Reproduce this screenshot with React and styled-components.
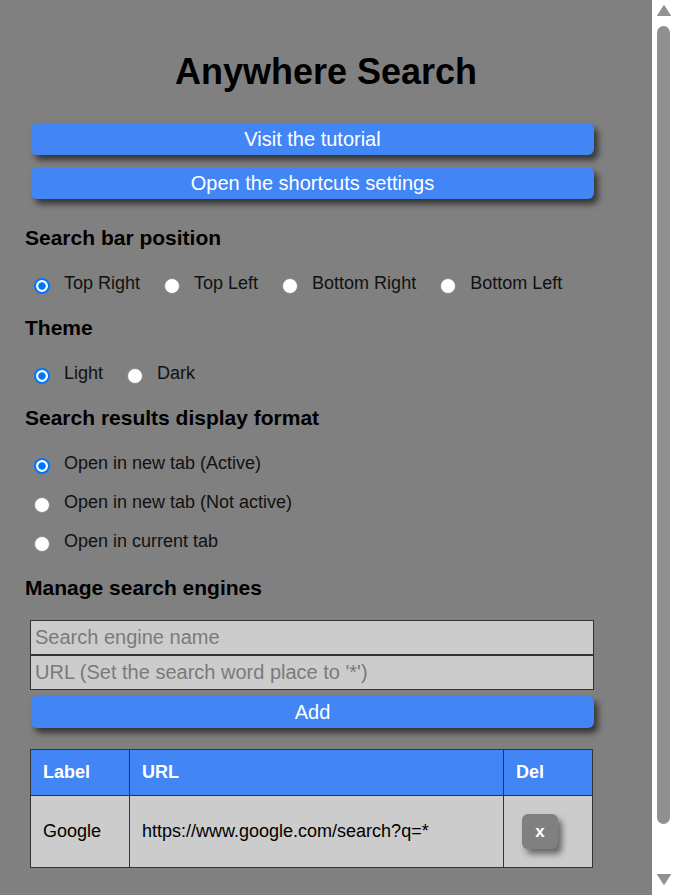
import React, { useState } from 'react'
import styled, { createGlobalStyle } from 'styled-components'

const GlobalStyle = createGlobalStyle`
	html, body {
		margin: 0;
		padding: 0;
		background: #808080;
		font-family: "Liberation Sans", Arial, sans-serif;
	}
`

const Layout = styled.div`
	display: flex;
	align-items: flex-start;
`

const Page = styled.div`
	flex: 1;
	min-width: 0;
	padding: 0 25px 92px;
	color: #000000;
`

// drawn stand-in for the window's scrollbar
const ScrollBar = styled.aside`
	position: sticky;
	top: 0;
	width: 23px;
	height: 100vh;
	flex-shrink: 0;
	display: flex;
	flex-direction: column;
	align-items: center;
	background: #ffffff;
`

const Arrow = styled.svg`
	display: block;
	width: 14px;
	height: 11px;
	margin: ${props => props.down ? '50px 0 0' : '5px 0 0'};
`

const Thumb = styled.div`
	width: 13px;
	height: 798px;
	margin-top: 10px;
	border-radius: 7px;
	background: #8f8f8f;
`

const Title = styled.h1`
	margin: 51px 0 30px;
	font-size: 36px;
	line-height: 42px;
	font-weight: 700;
	text-align: center;
`

const Button = styled.button`
	display: block;
	width: 563px;
	height: 32px;
	margin: 0 0 12px 6px;
	padding: 0;
	border: none;
	border-radius: 6px;
	background: #4285f4;
	color: #ffffff;
	font-family: inherit;
	font-size: 20px;
	line-height: 32px;
	box-shadow: 4px 5px 6px rgba(0, 0, 0, 0.6);
	cursor: pointer;
`

const Heading = styled.h3`
	margin: ${props => props.top || 22}px 0 ${props => props.bottom || 22}px;
	font-size: 21px;
	line-height: 24px;
	font-weight: 700;
`

const Options = styled.div`
	display: flex;
	flex-direction: ${props => props.column ? 'column' : 'row'};
	gap: ${props => props.column ? '17px' : '24px'};
	padding-left: 9px;
`

const Option = styled.label`
	display: flex;
	align-items: center;
	gap: 14px;
	height: 22px;
	font-size: 18px;
	line-height: 22px;
	color: #111111;
	cursor: pointer;
`

const Radio = styled.input.attrs({ type: 'radio' })`
	appearance: none;
	box-sizing: border-box;
	width: 16px;
	height: 16px;
	margin: 6px 0 0;
	border-radius: 50%;
	border: 1px solid #8a8a8a;
	background: #ffffff;
	flex-shrink: 0;

	&:checked {
		border: 2px solid #0075ff;
		background: radial-gradient(circle, #0075ff 0 3.4px, #ffffff 4px);
	}
`

const Inputs = styled.div`
	display: flex;
	flex-direction: column;
	width: 564px;
	margin: 0 0 6px 5px;
`

const TextInput = styled.input`
	box-sizing: border-box;
	height: 35px;
	margin: 0;
	padding: 0 4px;
	border: 1px solid #333333;
	background: #cccccc;
	font-family: inherit;
	font-size: 20px;
	color: #111111;
	outline: none;

	&::placeholder {
		color: #7a7a7a;
	}
`

const Table = styled.table`
	width: 562px;
	margin: 21px 0 0 5px;
	border-collapse: collapse;
	table-layout: fixed;
	font-size: 18px;
	line-height: 21px;

	th, td {
		border: 1px solid #333333;
		text-align: left;
	}

	th {
		padding: 12px 12px;
		background: #4285f4;
		color: #ffffff;
		font-weight: 700;
	}

	td {
		padding: 18px 12px;
		background: #cccccc;
		color: #000000;
	}
`

const DelButton = styled.button`
	width: 36px;
	height: 35px;
	margin-left: 6px;
	padding: 0;
	border: none;
	border-radius: 6px;
	background: #808080;
	color: #ffffff;
	font-family: inherit;
	font-size: 17px;
	font-weight: 700;
	box-shadow: 4px 5px 6px rgba(0, 0, 0, 0.5);
	cursor: pointer;
	vertical-align: middle;
`

const positions = ['Top Right', 'Top Left', 'Bottom Right', 'Bottom Left']
const themes = ['Light', 'Dark']
const formats = ['Open in new tab (Active)', 'Open in new tab (Not active)', 'Open in current tab']

function RadioGroup({ name, items, value, onChange, column }) {
	return (
		<Options column={column}>
			{items.map(item => (
				<Option key={item}>
					<Radio name={name} checked={value === item} onChange={() => onChange(item)} />
					{item}
				</Option>
			))}
		</Options>
	)
}

export default function App() {
	const [position, setPosition] = useState('Top Right')
	const [theme, setTheme] = useState('Light')
	const [format, setFormat] = useState('Open in new tab (Active)')

	return (
		<Layout>
			<GlobalStyle />
			<Page>
				<Title>Anywhere Search</Title>
				<Button>Visit the tutorial</Button>
				<Button>Open the shortcuts settings</Button>

				<Heading top={27}>Search bar position</Heading>
				<RadioGroup name="position" items={positions} value={position} onChange={setPosition} />

				<Heading>Theme</Heading>
				<RadioGroup name="theme" items={themes} value={theme} onChange={setTheme} />

				<Heading>Search results display format</Heading>
				<RadioGroup name="format" items={formats} value={format} onChange={setFormat} column />

				<Heading top={24} bottom={20}>Manage search engines</Heading>
				<Inputs>
					<TextInput placeholder="Search engine name" />
					<TextInput placeholder="URL (Set the search word place to '*')" />
				</Inputs>
				<Button>Add</Button>

				<Table>
					<colgroup>
						<col style={{ width: '99px' }} />
						<col style={{ width: '374px' }} />
						<col style={{ width: '89px' }} />
					</colgroup>
					<thead>
						<tr>
							<th>Label</th>
							<th>URL</th>
							<th>Del</th>
						</tr>
					</thead>
					<tbody>
						<tr>
							<td>Google</td>
							<td>https://www.google.com/search?q=*</td>
							<td><DelButton>x</DelButton></td>
						</tr>
					</tbody>
				</Table>
			</Page>

			<ScrollBar>
				<Arrow viewBox="0 0 14 11">
					<path d="M7 0.5 L13.5 10.5 L0.5 10.5 Z" fill="#919191" strokeLinejoin="round" stroke="#919191" strokeWidth="1" />
				</Arrow>
				<Thumb />
				<Arrow down viewBox="0 0 14 11">
					<path d="M0.5 0.5 L13.5 0.5 L7 10.5 Z" fill="#919191" strokeLinejoin="round" stroke="#919191" strokeWidth="1" />
				</Arrow>
			</ScrollBar>
		</Layout>
	)
}
